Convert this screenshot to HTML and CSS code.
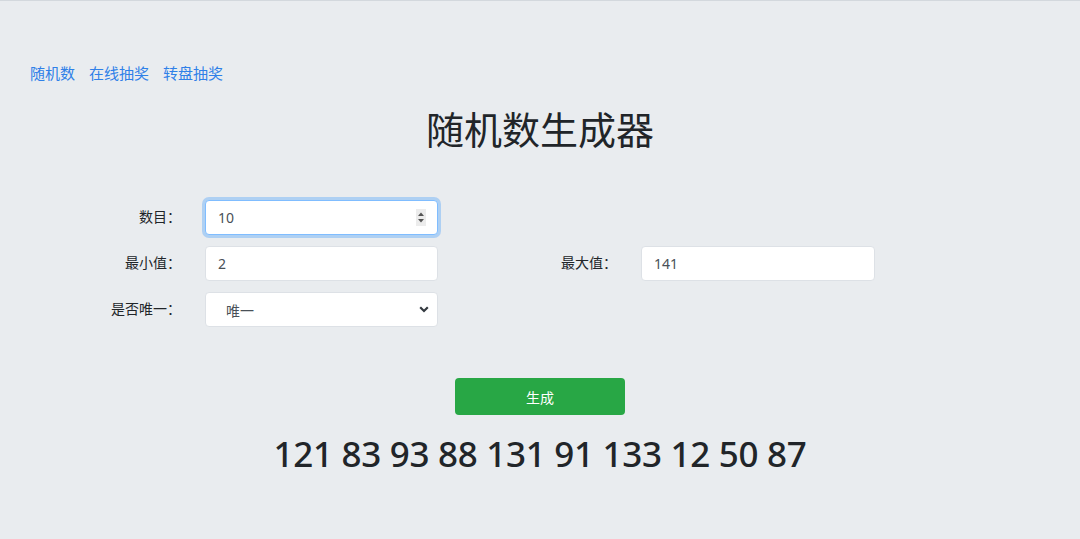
FILE: index.html
```html
<!DOCTYPE html>
<html lang="zh-CN">
<head>
<meta charset="utf-8">
<title>随机数生成器</title>
<link rel="stylesheet" href="styles.css">
</head>
<body>
<div class="page">
  <nav class="nav">
    <a href="#">随机数</a>
    <a href="#">在线抽奖</a>
    <a href="#">转盘抽奖</a>
  </nav>
  <h1 class="title">随机数生成器</h1>
  <form class="form">
    <label class="label">数目：</label>
    <div class="field">
      <input class="control focus" type="text" value="10">
      <svg class="spin" width="10" height="17" viewBox="0 0 10 17"><rect width="10" height="17" fill="#ececec"/><path d="M5 3.5 L8 7 L2 7 Z" fill="#555"/><path d="M5 13.5 L8 10 L2 10 Z" fill="#555"/></svg>
    </div>
    <div></div>
    <div></div>

    <label class="label">最小值：</label>
    <div class="field"><input class="control" type="text" value="2"></div>
    <label class="label">最大值：</label>
    <div class="field"><input class="control" type="text" value="141"></div>

    <label class="label">是否唯一：</label>
    <div class="field">
      <div class="control select">唯一</div>
      <svg class="chev" width="10" height="7" viewBox="0 0 10 7"><path d="M1.2 1.3 L5 5 L8.8 1.3" fill="none" stroke="#343a40" stroke-width="2.2"/></svg>
    </div>
    <div></div>
    <div></div>
  </form>
  <div class="actions">
    <button class="btn" type="button">生成</button>
  </div>
  <h2 class="result">121 83 93 88 131 91 133 12 50 87</h2>
</div>
</body>
</html>
```
FILE: styles.css
```css
* { box-sizing: border-box; }
html, body { height: 100%; }
body {
  margin: 0;
  background: #e9ecef;
  border-top: 1px solid #d3d8dd;
  font-family: "Noto Sans", "Noto Sans CJK SC", sans-serif;
  color: #212529;
}
.page { display: flex; flex-direction: column; }
.nav {
  margin-top: 61px;
  padding-left: 30px;
  display: flex;
  gap: 14px;
  font-family: "Noto Sans CJK SC", sans-serif;
  font-size: 15px;
  line-height: 22px;
}
.nav a { color: #2f80e8; text-decoration: none; }
.title {
  margin: 21px 0 0;
  text-align: center;
  font-family: "Noto Sans CJK SC", sans-serif;
  font-weight: 400;
  font-size: 38px;
  line-height: 46px;
  color: #212529;
}
.form {
  margin-top: 49px;
  padding-left: 17px;
  display: grid;
  grid-template-columns: 164px 233px 155px 234px;
  grid-auto-rows: 35px;
  column-gap: 24px;
  row-gap: 11px;
}
.label {
  display: flex;
  align-items: center;
  justify-content: flex-end;
  padding-bottom: 3px;
  font-family: "Noto Sans CJK SC", sans-serif;
  font-size: 14px;
  color: #212529;
}
.field { position: relative; }
.control {
  display: flex;
  align-items: center;
  width: 100%;
  height: 35px;
  padding: 0 12px;
  border: 1px solid #dde1e6;
  border-radius: 4px;
  background: #fff;
  font-family: "Noto Sans", "Noto Sans CJK SC", sans-serif;
  font-size: 14px;
  color: #495057;
  outline: none;
}
.control.focus {
  border-color: #80bdff;
  box-shadow: 0 0 0 3px rgba(0, 123, 255, 0.25);
}
.select { padding-left: 20px; font-family: "Noto Sans CJK SC", sans-serif; }
.spin { position: absolute; right: 12px; top: 9px; }
.chev { position: absolute; right: 9px; top: 14px; }
.actions {
  margin-top: 51px;
  display: flex;
  justify-content: center;
}
.btn {
  width: 170px;
  height: 37px;
  border: 0;
  border-radius: 4px;
  background: #28a745;
  color: #fff;
  font-family: "Noto Sans CJK SC", sans-serif;
  font-size: 14px;
}
.result {
  margin: 18px 0 0;
  text-align: center;
  font-family: "Noto Sans", sans-serif;
  font-weight: 500;
  font-size: 35px;
  line-height: 42px;
  letter-spacing: -0.3px;
  color: #212529;
}
```
